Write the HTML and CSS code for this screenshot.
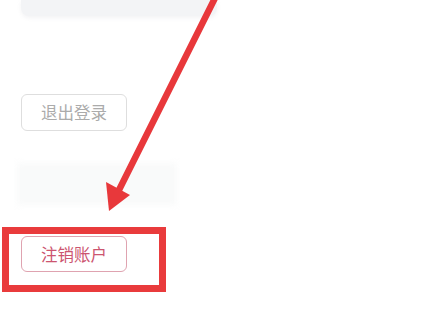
FILE: index.html
```html
<!DOCTYPE html>
<html lang="zh">
<head>
<meta charset="utf-8">
<link rel="stylesheet" href="styles.css">
</head>
<body>
<div class="page">
  <div class="top-card"></div>
  <button class="btn btn-logout">退出登录</button>
  <div class="faint-band"></div>
  <div class="highlight">
    <button class="btn btn-cancel">注销账户</button>
  </div>
  <svg class="arrow" width="444" height="320" viewBox="0 0 444 320">
    <line x1="217" y1="-6" x2="117" y2="194" stroke="#e8383b" stroke-width="6.5" stroke-linecap="round"/>
    <polygon points="106,182 130,195 109,211" fill="#e8383b"/>
  </svg>
</div>
</body>
</html>
```
FILE: styles.css
```css
html, body {
  margin: 0;
  padding: 0;
  background: #ffffff;
}
.page {
  position: relative;
  width: 444px;
  height: 320px;
  overflow: hidden;
  display: flex;
  flex-direction: column;
  align-items: flex-start;
  font-family: "Noto Sans CJK SC", "Noto Sans", sans-serif;
}
.top-card {
  margin-left: 21px;
  width: 196px;
  height: 16px;
  background: #f3f4f6;
  border-radius: 0 0 8px 8px;
  box-shadow: 0 2px 4px rgba(240, 240, 242, 0.8);
}
.btn {
  box-sizing: border-box;
  width: 106px;
  height: 37px;
  background: #fff;
  border-radius: 6px;
  font-family: inherit;
  font-size: 16.5px;
  font-weight: 400;
  line-height: 1;
  padding: 0;
  display: flex;
  align-items: center;
  justify-content: center;
}
.btn-logout {
  margin-top: 78px;
  margin-left: 21px;
  border: 1px solid #dedede;
  color: #ababab;
}
.faint-band {
  margin-top: 32px;
  margin-left: 17px;
  width: 160px;
  height: 42px;
  background: #f9fafa;
  filter: blur(3px);
}
.highlight {
  box-sizing: border-box;
  margin-top: 22px;
  margin-left: 2px;
  width: 164px;
  height: 65px;
  border: 7px solid #e93b3c;
  padding: 2px 0 0 12px;
}
.btn-cancel {
  height: 36px;
  border: 1px solid #dfa3b0;
  color: #cc5570;
}
.arrow {
  position: absolute;
  left: 0;
  top: 0;
}
```
